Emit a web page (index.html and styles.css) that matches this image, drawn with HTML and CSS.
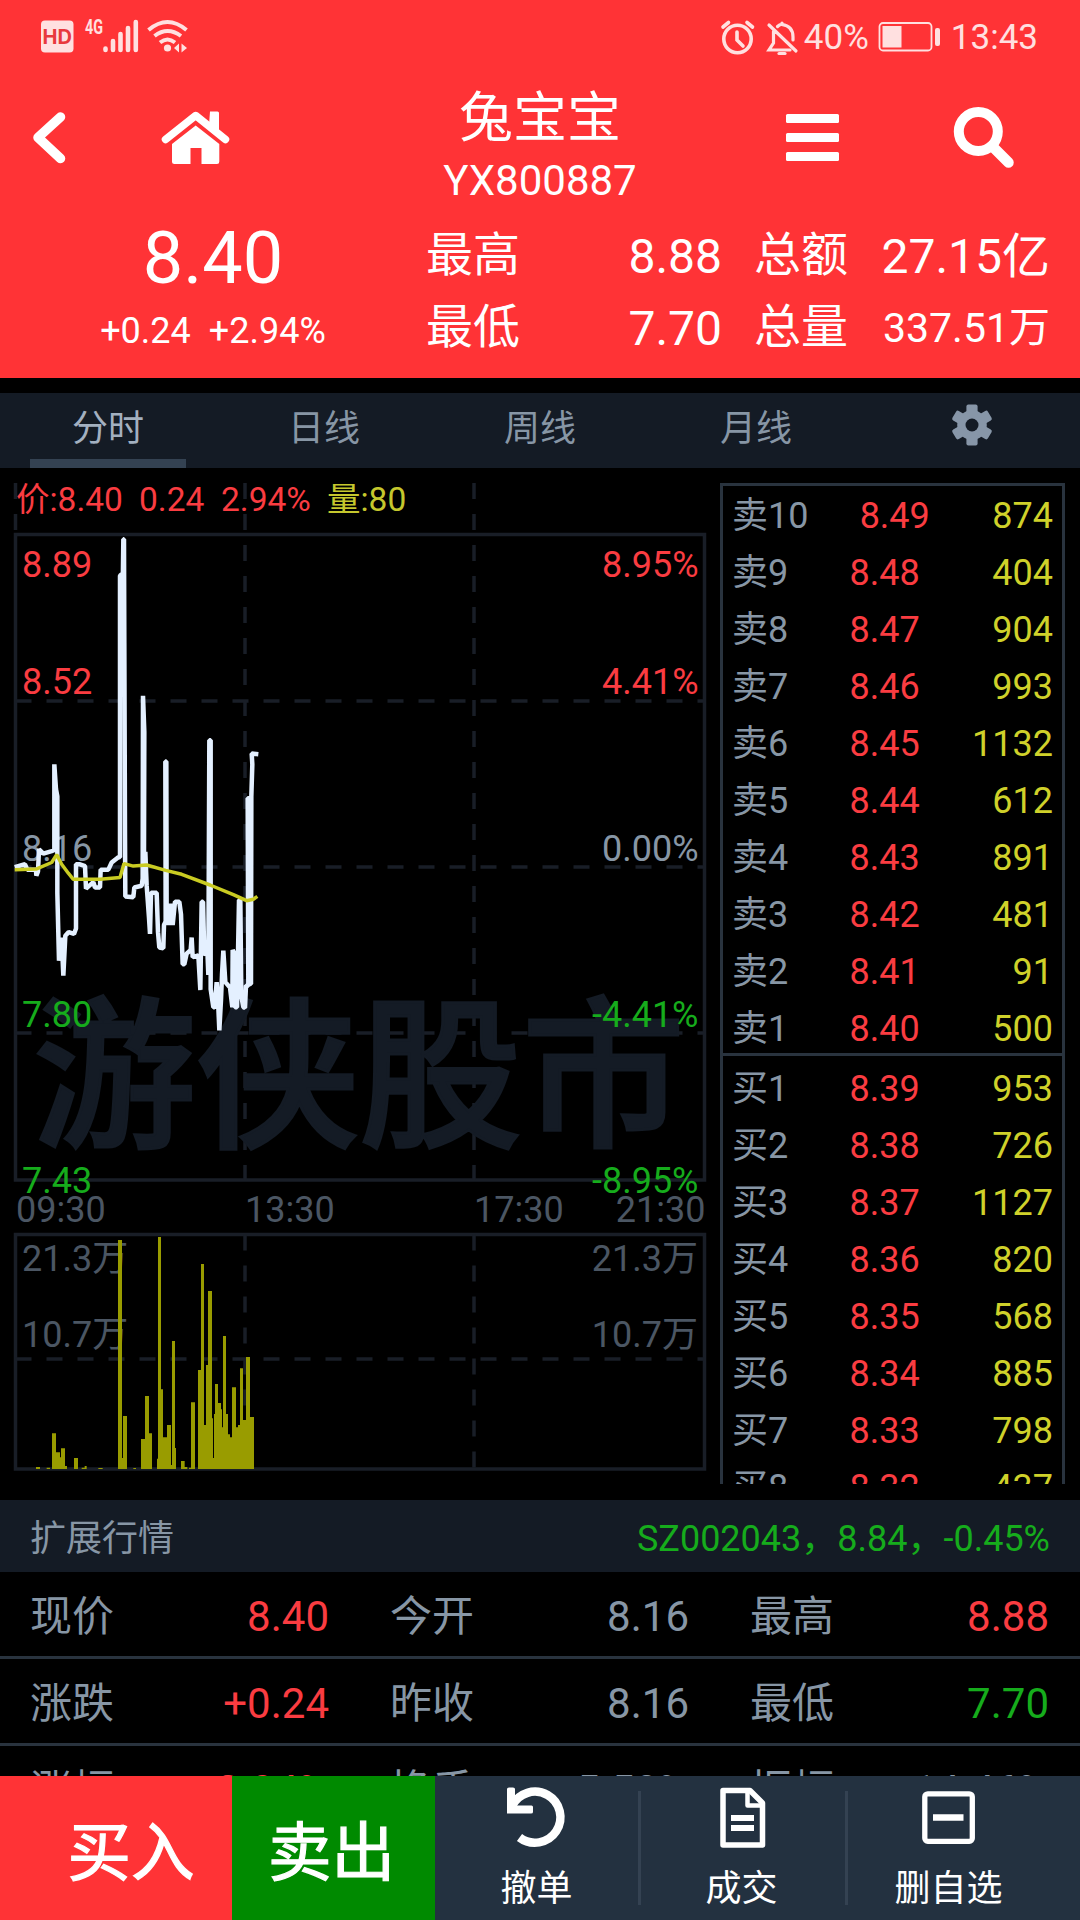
FILE: index.html
```html
<!DOCTYPE html>
<html lang="zh-CN">
<head>
<meta charset="utf-8">
<title>兔宝宝 YX800887</title>
<link rel="stylesheet" href="styles.css">
</head>
<body>
<div class="app">
  <header class="header">
    <div class="status">
      <svg class="status-left" viewBox="36 12 160 48" width="160" height="48">
        <rect x="41" y="20.500" width="32.500" height="32" rx="4" fill="#ffe0e0"/>
        <text x="57.200" y="43.500" class="hd">HD</text>
        <text x="85" y="33.500" class="net" textLength="18" lengthAdjust="spacingAndGlyphs">4G</text>
        <g stroke="#ffe0e0" stroke-width="4.600" stroke-linecap="round">
          <path d="M105.500 48.500V50M113 41V50M120.500 34V50M128 28V50M135.800 22V50"/>
        </g>
        <g fill="none" stroke="#ffe0e0" stroke-width="4">
          <path d="M148.500 30Q167.500 14 186.500 30M154.500 36Q167.500 26 181 36M160 42.500Q167.500 36.500 175 42.500"/>
        </g>
        <circle cx="167.500" cy="48" r="3.600" fill="#ffe0e0"/>
        <path d="M179 43.500V52.500L174 48ZM181.500 43.500L187 48L181.500 52.500Z" fill="#ffe0e0"/>
      </svg>
      <div class="status-right">
        <svg viewBox="716 16 82 40" width="82" height="40" fill="none" stroke="#ffe0e0" stroke-width="3.600" stroke-linecap="round">
          <circle cx="734.500" cy="38" r="13.700"/>
          <path d="M734 31V39L740 45M720 26L725.500 21.500M749.500 26L744 21.500"/>
          <g stroke-width="3.200"><path d="M766 24L793 50M770.500 30.500V42L766 49H787M774.500 25.500Q777 23 779 23.500M779 23.500V22M779 23.500Q790 25 790 36V39"/><path d="M776 52.500H782"/></g>
        </svg>
        <span class="pct">40%</span>
        <svg viewBox="876 20 66 34" width="66" height="34">
          <rect x="878.500" y="23" width="52" height="27.500" rx="3.500" fill="none" stroke="#ffe0e0" stroke-width="1.800"/>
          <rect x="881.500" y="26" width="19" height="21.500" fill="#ffe0e0"/>
          <rect x="934" y="28" width="5" height="18" rx="2" fill="#ffe0e0"/>
        </svg>
        <span class="clock">13:43</span>
      </div>
    </div>

    <nav class="nav">
      <a class="back"><svg viewBox="31 108 36 60" width="36" height="60"><path d="M60.500 117L38 137.500L60.500 158.500" fill="none" stroke="#fff" stroke-width="9.500" stroke-linecap="round" stroke-linejoin="round"/></svg></a>
      <a class="home"><svg viewBox="160 108 72 60" width="72" height="60"><path d="M165.500 139.500L195.700 115.500L225.500 139.500" fill="none" stroke="#fff" stroke-width="7.500" stroke-linecap="round" stroke-linejoin="round"/><path d="M210 111.500H217.500Q219 111.500 219 113V133L209 125ZM195.700 125.500L219.300 144V161.500Q219.300 164 217 164H201.500V148H190.500V164H174.500Q172 164 172 161.500V144Z" fill="#fff"/></svg></a>
      <div class="title">
        <h1>兔宝宝</h1>
        <p>YX800887</p>
      </div>
      <a class="menu"><svg viewBox="784 108 57 60" width="57" height="60" fill="#fff"><rect x="786" y="114" width="53" height="9" rx="1.500"/><rect x="786" y="133" width="53" height="9" rx="1.500"/><rect x="786" y="152" width="53" height="9" rx="1.500"/></svg></a>
      <a class="search"><svg viewBox="952 106 64 64" width="64" height="64" fill="none" stroke="#fff"><circle cx="978.300" cy="131.500" r="19.500" stroke-width="10"/><path d="M995 149L1008.500 162.500" stroke-width="10.500" stroke-linecap="round"/></svg></a>
    </nav>

    <section class="quote">
      <div class="last">
        <div class="price">8.40</div>
        <div class="change"><span>+0.24</span><span>+2.94%</span></div>
      </div>
      <dl class="stats">
        <dt>最高</dt><dd>8.88</dd><dt>总额</dt><dd>27.15亿</dd>
        <dt>最低</dt><dd>7.70</dd><dt>总量</dt><dd class="small">337.51万</dd>
      </dl>
    </section>
  </header>

  <div class="tabs">
    <a class="tab active">分时</a><a class="tab">日线</a><a class="tab">周线</a><a class="tab">月线</a>
    <a class="tab"><svg viewBox="-22 -22 44 44" width="44" height="44" fill="#8796a8">
      <circle r="14.800"/>
      <rect x="-5.600" y="-20.500" width="11.200" height="41" rx="2"/>
      <rect x="-5.600" y="-20.500" width="11.200" height="41" rx="2" transform="rotate(60)"/>
      <rect x="-5.600" y="-20.500" width="11.200" height="41" rx="2" transform="rotate(120)"/>
      <circle r="6.500" fill="#141b25"/>
    </svg></a>
  </div>

  <main class="market">
    <svg class="chart" viewBox="0 468 720 1016" width="720" height="1016">
      <g class="grid">
        <rect x="15.500" y="534.500" width="689" height="645.500"/>
        <rect x="15.500" y="1234.500" width="689" height="234.500"/>
        <path stroke-dasharray="16 15" d="M15.500 483V534M245 483V1180M474 483V1180M15.500 701H704M15.500 867H704M15.500 1033H704M15.500 1359H704M245 1234.500V1469M474 1234.500V1469"/>
      </g>
      <text class="watermark" x="359" y="1134">游侠股市</text>

      <g class="info">
        <text x="16" y="511" class="up">价:8.40</text>
        <text x="139" y="511" class="up">0.24</text>
        <text x="221" y="511" class="up">2.94%</text>
        <text x="327" y="511" class="vol">量:80</text>
      </g>

      <g class="axis">
        <text x="22" y="577" class="up">8.89</text><text x="698.500" y="577" class="up end">8.95%</text>
        <text x="22" y="694" class="up">8.52</text><text x="698.500" y="694" class="up end">4.41%</text>
        <text x="22" y="861">8.16</text><text x="698.500" y="861" class="end">0.00%</text>
        <text x="22" y="1027" class="down">7.80</text><text x="698.500" y="1027" class="down end">-4.41%</text>
        <text x="22" y="1193" class="down">7.43</text><text x="698.500" y="1193" class="down end">-8.95%</text>
      </g>
      <g class="axis dim">
        <text x="16" y="1221.500">09:30</text><text x="245" y="1221.500">13:30</text><text x="474" y="1221.500">17:30</text><text x="705.500" y="1221.500" class="end">21:30</text>
        <text x="22" y="1271">21.3万</text><text x="698" y="1271" class="end">21.3万</text>
        <text x="22" y="1347">10.7万</text><text x="698" y="1347" class="end">10.7万</text>
      </g>

      <!-- minute price and running average -->
      <g transform="translate(0 500) scale(.33333 .35714)" fill="none" stroke-linejoin="bevel">
        <polyline class="line" points="44,1028 75,1020 82,1035 108,1035 109,1052 114,1040 117,978 130,990 155,983 163,980 163,740 168,810 172,830 172,1100 177,1290 185,1225 190,1332 196,1220 206,1210 222,1215 228,1200 228,1020 240,1020 255,1025 258,1088 280,1070 285,1085 300,1085 302,1035 325,1035 335,1015 355,1000 360,1000 360,212 365,208 366,400 370,110 372,110 373,400 375,935 376,1110 400,1112 403,1085 425,1080 428,1060 429,548 433,650 432,985 428,1070 436,985 440,1080 447,1170 450,1215 453,1100 470,1100 474,1210 478,1253 490,1255 492,1190 497,1180 496,732 499,732 500,1190 506,1130 510,1190 514,1130 518,1190 525,1125 538,1125 543,1160 548,1300 553,1300 560,1270 572,1260 575,1225 578,1280 595,1275 601,1372 605,1125 609,1125 613,1275 622,1260 625,1330 628,673 632,673 632,1370 640,1420 644,1420 650,1350 655,1420 658,1485 663,1400 666,1330 670,1262 676,1350 690,1365 697,1420 698,1260 703,1270 705,1420 711,1420 717,1120 721,1120 724,1390 730,1420 735,1422 738,1360 745,1360 743,835 748,835 748,1355 753,1355 754,830 757,740 755,710 775,712"/>
        <polyline class="avg" points="44,1035 110,1033 155,1015 170,993 185,1020 205,1045 220,1062 300,1062 360,1057 372,1018 400,1025 440,1022 497,1037 545,1048 630,1078 700,1105 740,1122 760,1118 772,1110"/>
      </g>

      <!-- minute volume -->
      <path class="bars" transform="translate(0 1220) scale(.33333)" d="M108 747V741H120V747ZM140 747V743H150V747ZM156 747V640H168V697H180V712H183V685H195V738H201V747ZM222 747V714H234V747ZM245 747V743H254V738H260V747ZM295 747V744H308V747ZM354 747V60H366V714H369V588H381V747ZM400 747V744H408V747ZM423 747V657H435V528H447V640H456V747ZM471 747V716H474V51H483V508H489V652H501V615H513V735H516V363H525V684H528V747ZM543 747V723H554V741H562V747ZM567 747V743H573V547H585V747ZM594 747V450H603V132H612V615H618V435H624V213H636V595H639V714H642V582H645V492H654V549H663V568H666V622H669V348H678V582H684V643H690V652H696V502H708V622H714V615H720V445H729V600H738V411H750V591H762V747Z"/>
    </svg>

    <div class="book">
      <div class="asks">
        <div class="order"><span>卖10</span><b>8.49</b><i>874</i></div>
        <div class="order"><span>卖9</span><b>8.48</b><i>404</i></div>
        <div class="order"><span>卖8</span><b>8.47</b><i>904</i></div>
        <div class="order"><span>卖7</span><b>8.46</b><i>993</i></div>
        <div class="order"><span>卖6</span><b>8.45</b><i>1132</i></div>
        <div class="order"><span>卖5</span><b>8.44</b><i>612</i></div>
        <div class="order"><span>卖4</span><b>8.43</b><i>891</i></div>
        <div class="order"><span>卖3</span><b>8.42</b><i>481</i></div>
        <div class="order"><span>卖2</span><b>8.41</b><i>91</i></div>
        <div class="order"><span>卖1</span><b>8.40</b><i>500</i></div>
      </div>
      <div class="bids">
        <div class="order"><span>买1</span><b>8.39</b><i>953</i></div>
        <div class="order"><span>买2</span><b>8.38</b><i>726</i></div>
        <div class="order"><span>买3</span><b>8.37</b><i>1127</i></div>
        <div class="order"><span>买4</span><b>8.36</b><i>820</i></div>
        <div class="order"><span>买5</span><b>8.35</b><i>568</i></div>
        <div class="order"><span>买6</span><b>8.34</b><i>885</i></div>
        <div class="order"><span>买7</span><b>8.33</b><i>798</i></div>
        <div class="order"><span>买8</span><b>8.32</b><i>437</i></div>
      </div>
    </div>
  </main>

  <section class="extended">
    <div class="ext-head"><span>扩展行情</span><span class="down">SZ002043，8.84，-0.45%</span></div>
    <div class="ext-row">
      <div><span>现价</span><span class="up">8.40</span></div><div><span>今开</span><span>8.16</span></div><div><span>最高</span><span class="up">8.88</span></div>
    </div>
    <div class="ext-row">
      <div><span>涨跌</span><span class="up">+0.24</span></div><div><span>昨收</span><span>8.16</span></div><div><span>最低</span><span class="down">7.70</span></div>
    </div>
    <div class="ext-row">
      <div><span>涨幅</span><span class="up">+2.94%</span></div><div><span>换手</span><span>5.58%</span></div><div><span>振幅</span><span>14.46%</span></div>
    </div>
  </section>

  <footer class="actions">
    <a class="buy">买入</a>
    <a class="sell">卖出</a>
    <a class="tool first"><svg viewBox="504 1784 64 66" width="64" height="66"><path d="M511 1806A25.500 25.500 0 1 1 518.500 1837.500" fill="none" stroke="#fff" stroke-width="8.500"/><path d="M506 1789Q506 1787.500 508 1787.500H512Q514 1787.500 514 1789V1805.500H530.500Q532 1805.500 532 1807V1812Q532 1813.500 530 1813.500H506Z" fill="#fff"/></svg><span>撤单</span></a>
    <a class="tool"><svg viewBox="710 1784 64 66" width="64" height="66" fill="none" stroke="#fff" stroke-width="5.500" stroke-linejoin="round"><path d="M723 1790.500H750L762.500 1803V1845H723Z"/><path d="M747.500 1791V1805.500H762" stroke-width="4.500"/><path d="M731 1818H754M731 1828H754" stroke-width="6"/></svg><span>成交</span></a>
    <a class="tool"><svg viewBox="917 1784 64 66" width="64" height="66" fill="none" stroke="#fff" stroke-width="5.300"><rect x="924.800" y="1793.800" width="47.500" height="47.500" rx="3"/><path d="M933 1817.500H963.500" stroke-width="6.500"/></svg><span>删自选</span></a>
  </footer>
</div>
</body>
</html>
```
FILE: styles.css
```css
* { box-sizing: border-box; }

body {
  margin: 0;
  background: #000;
  color: #8796a5;
  font-family: Roboto, "Noto Sans CJK SC", sans-serif;
  font-size: 36px;
}

h1, p, dl, dt, dd { margin: 0; font-weight: 400; }
svg { display: block; }

.app {
  width: 1080px;
  height: 1920px;
  display: flex;
  flex-direction: column;
  overflow: hidden;
}

.up { color: #fa3c41; fill: #fa3c41; }
.down { color: #16ac1c; fill: #16ac1c; }

/* header */
.header {
  flex: none;
  height: 378px;
  background: #ff3336;
  color: #fff;
}

.status {
  height: 76px;
  padding: 0 42px 0 36px;
  display: flex;
  justify-content: space-between;
  align-items: center;
}
.status-left { margin-top: -4px; }
.status-right {
  display: flex;
  align-items: center;
  color: #ffe0e0;
  font-size: 35px;
  line-height: 40px;
}
.status-right svg { margin-top: -3px; }
.pct { margin: 0 8px 0 3px; }
.clock { margin-left: 8px; }
.hd { font: 700 20px Inter, sans-serif; fill: #e8393d; text-anchor: middle; }
.net { font: 700 20px Roboto, sans-serif; fill: #ffe0e0; }

.nav {
  height: 134px;
  display: grid;
  grid-template-columns: 98px 196px 72px 348px 196px 148px;
}
.nav a {
  padding-bottom: 10px;
  display: flex;
  align-items: center;
  justify-content: center;
}
.title { grid-column: 4; text-align: center; }
.title h1 { font-size: 54px; line-height: 72px; margin-top: 7px; }
.title p { font-size: 42px; line-height: 52px; }

.quote { display: flex; }
.last { width: 426px; text-align: center; }
.price { font-size: 72px; line-height: 98px; }
.change {
  display: flex;
  justify-content: center;
  gap: 18px;
  line-height: 46px;
}
.stats {
  padding-top: 10px;
  display: grid;
  grid-template-columns: 94px 202px 126px 202px;
  grid-auto-rows: 71.500px;
  font-size: 48px;
  line-height: 73px;
}
.stats dt { font-size: 47px; line-height: 70px; }
.stats dt:nth-of-type(even) { text-align: right; }
.stats dd { text-align: right; }
.stats .small { font-size: 41px; }

/* period tabs */
.tabs {
  flex: none;
  height: 75px;
  margin-top: 15px;
  display: flex;
  background: #141b25;
}
.tab {
  width: 216px;
  display: flex;
  align-items: center;
  justify-content: center;
  padding-bottom: 11px;
}
.tab.active {
  color: #a3b0c0;
  background: linear-gradient(#344252, #344252) 30px 100% / 156px 9px no-repeat;
}

/* chart and order book */
.market { flex: none; height: 1016px; display: flex; }
.chart { flex: none; }
.grid rect, .grid path { fill: none; stroke: #191e27; stroke-width: 3.500; }
.watermark {
  font: 500 163px "Noto Sans CJK SC", sans-serif;
  fill: #141b25;
  stroke: #141b25;
  stroke-width: 3px;
  text-anchor: middle;
}
.info { font-size: 33.500px; }
.vol { fill: #c5c72d; }
.axis { fill: #8796a5; }
.dim { fill: #4b5663; }
.end { text-anchor: end; }
.line { stroke: #e4f0ff; stroke-width: 4.500; vector-effect: non-scaling-stroke; }
.avg { stroke: #c9cb22; stroke-width: 3.500; vector-effect: non-scaling-stroke; }
.bars { fill: #999c00; }

.book {
  width: 345px;
  margin-top: 15px;
  border: 3px solid #29333e;
  border-bottom: 0;
  overflow: hidden;
}
.asks { height: 570px; border-bottom: 3px solid #29333e; }
.bids { padding-top: 3px; }
.order {
  height: 57px;
  padding: 0 9px;
  display: flex;
  line-height: 60px;
}
.order b { flex: 1; text-align: center; font-weight: 400; color: #fa3c41; }
.order i {
  width: 72px;
  display: flex;
  justify-content: flex-end;
  font-style: normal;
  color: #cfd12a;
}

/* extended quote table */
.extended {
  flex: none;
  height: 276px;
  margin-top: 16px;
  overflow: hidden;
}
.ext-head {
  height: 72px;
  padding: 0 30px;
  display: flex;
  justify-content: space-between;
  background: #141b25;
  line-height: 78px;
}
.ext-row {
  height: 87px;
  border-bottom: 3px solid #29333e;
  display: grid;
  grid-template-columns: repeat(3, 360px);
  font-size: 42px;
  line-height: 90px;
}
.ext-row div {
  padding: 0 31px 0 30px;
  display: flex;
  justify-content: space-between;
}

/* bottom bar */
.actions {
  flex: 1;
  display: flex;
  background: #233140;
  color: #fff;
}
.buy, .sell {
  font-size: 63.500px;
  -webkit-text-stroke: 1.200px #fff;
  line-height: 156px;
  text-align: center;
}
.buy { width: 232px; padding-left: 30px; background: #ff3336; }
.sell { width: 203px; padding-right: 4px; background: #008a00; }
.tool {
  width: 207px;
  padding-top: 8px;
  display: flex;
  flex-direction: column;
  align-items: center;
  background: linear-gradient(#344252, #344252) 0 15px / 3px 114px no-repeat;
}
.tool.first { width: 203px; background: none; }
.tool span { margin-top: 16px; line-height: 46px; }
```
